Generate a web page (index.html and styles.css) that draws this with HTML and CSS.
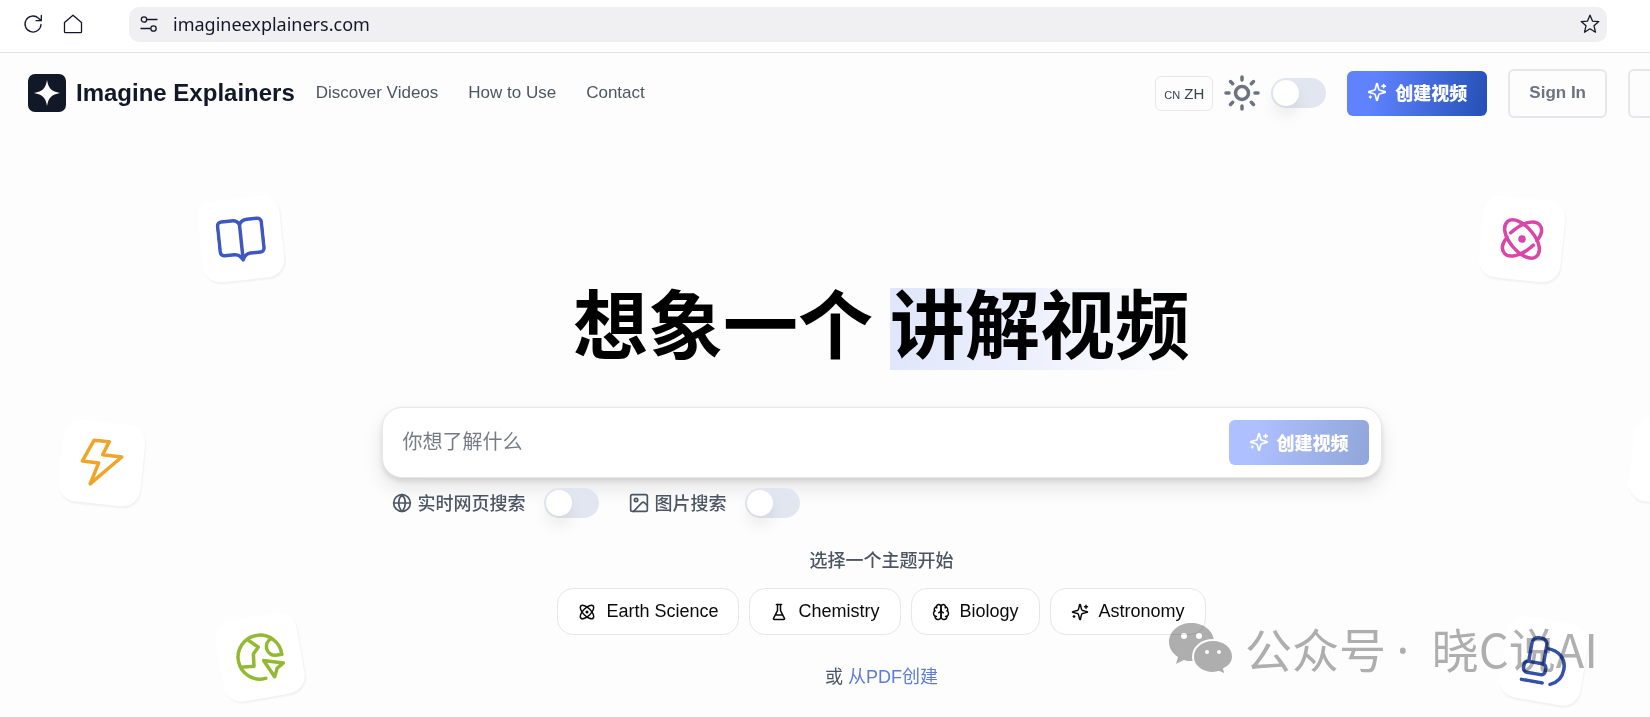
FILE: index.html
```html
<!DOCTYPE html>
<html lang="zh">
<head>
  <meta charset="UTF-8" />
  <title>Imagine Explainers</title>
  <link rel="stylesheet" href="styles.css">
</head>
<body>
  <svg class="sprite" aria-hidden="true">
    <symbol id="sparkles" viewBox="0 0 24 24">
      <path d="M9.937 15.5A2 2 0 0 0 8.5 14.063l-6.135-1.582a.5.5 0 0 1 0-.962L8.5 9.936A2 2 0 0 0 9.937 8.5l1.582-6.135a.5.5 0 0 1 .963 0L14.063 8.5A2 2 0 0 0 15.5 9.937l6.135 1.581a.5.5 0 0 1 0 .964L15.5 14.063a2 2 0 0 0-1.437 1.437l-1.582 6.135a.5.5 0 0 1-.963 0z" />
      <path d="M20 3v4M22 5h-4M4 17v2M5 18H3" />
    </symbol>
    <symbol id="bolt" viewBox="0 0 48 48">
      <path d="M13.700 2.300 29 2l-5.200 13.700L43 16 14.400 46l6.300-21.700-16.500-.2z" />
    </symbol>
  </svg>

  <div class="browser-bar">
    <button class="browser-button" aria-label="Reload">
      <svg class="icon" viewBox="0 0 20 20"><path d="M18 10.500a8 8 0 1 1-2.500-6.300L18 6.500M18.300 1.500v5.200h-5.200" /></svg>
    </button>
    <button class="browser-button" aria-label="Home">
      <svg class="icon" viewBox="0 0 20 20"><path d="M1.500 8.500 10 1.200l8.500 7.300v9.200a1 1 0 0 1-1 1h-15a1 1 0 0 1-1-1z" /></svg>
    </button>
    <div class="address">
      <svg class="icon" viewBox="0 0 20 20"><circle cx="5" cy="5.500" r="2.700" /><path d="M8 5.500h10M2 14.500h9" /><circle cx="14.500" cy="14.500" r="2.700" /></svg>
      <input type="text" value="imagineexplainers.com" aria-label="Address" />
      <button class="star" aria-label="Bookmark">
        <svg class="icon" viewBox="0 0 20 20"><path d="m10 1.200 2.500 5.900 6.300.5-4.800 4.200 1.500 6.400-5.500-3.400-5.500 3.400L6 11.800 1.200 7.600l6.300-.5z" /></svg>
      </button>
    </div>
  </div>

  <div class="page">
    <header>
      <a class="brand" href="#">
        <svg class="logo" viewBox="0 0 38 38"><rect width="38" height="38" rx="7" /><path d="M19 6c1.500 8.500 4.500 11.500 13 13-8.500 1.500-11.500 4.500-13 13-1.500-8.500-4.500-11.500-13-13 8.500-1.500 11.500-4.500 13-13z" /></svg>
        <strong>Imagine Explainers</strong>
      </a>
      <nav>
        <a href="#">Discover Videos</a>
        <a href="#">How to Use</a>
        <a href="#">Contact</a>
      </nav>
      <div class="actions">
        <button class="language"><small>CN</small> ZH</button>
        <label class="theme">
          <svg class="sun" viewBox="0 0 36 36"><circle cx="18" cy="18" r="6.500" /><path d="M18 2v3M18 31v3M2 18h3M31 18h3M6.500 6.500l2.200 2.200M27.300 27.300l2.200 2.200M6.500 29.500l2.200-2.200M27.300 8.700l2.200-2.200" /></svg>
          <input class="switch" type="checkbox" aria-label="Theme" />
        </label>
        <button class="create"><svg class="icon"><use href="#sparkles" /></svg>创建视频</button>
        <button class="sign">Sign In</button>
        <button class="sign" aria-label="Sign Up"></button>
      </div>
    </header>

    <main>
      <h1>想象一个 <mark>讲解视频</mark></h1>

      <form class="search">
        <input type="text" placeholder="你想了解什么" aria-label="你想了解什么" />
        <button class="create" type="button" disabled><svg class="icon"><use href="#sparkles" /></svg>创建视频</button>
      </form>

      <div class="options">
        <label>
          <svg class="icon" viewBox="0 0 24 24"><circle cx="12" cy="12" r="10" /><path d="M12 2a14.500 14.500 0 0 0 0 20 14.500 14.500 0 0 0 0-20M2 12h20" /></svg>
          <span>实时网页搜索</span>
          <input class="switch" type="checkbox" />
        </label>
        <label>
          <svg class="icon" viewBox="0 0 24 24"><rect x="2" y="2" width="20" height="20" rx="2" /><circle cx="8.500" cy="8.500" r="2" /><path d="m22 15-3.600-3.400a2 2 0 0 0-2.800 0L5.500 22" /></svg>
          <span>图片搜索</span>
          <input class="switch" type="checkbox" />
        </label>
      </div>

      <p class="topics-title">选择一个主题开始</p>
      <div class="topics">
        <button>
          <svg class="icon" viewBox="0 0 24 24"><circle cx="12" cy="12" r="1" /><path d="M20.200 20.200c2.040-2.030.02-7.360-4.500-11.900-4.540-4.520-9.870-6.540-11.900-4.500-2.040 2.030-.02 7.360 4.500 11.900 4.540 4.520 9.870 6.540 11.900 4.500Z" /><path d="M15.700 15.700c4.520-4.540 6.540-9.870 4.500-11.900-2.030-2.040-7.360-.02-11.900 4.500-4.520 4.540-6.540 9.870-4.500 11.900 2.030 2.040 7.360.02 11.900-4.500Z" /></svg>
          Earth Science
        </button>
        <button>
          <svg class="icon" viewBox="0 0 24 24"><path d="M10 2v7.527a2 2 0 0 1-.211.896L4.720 20.550a1 1 0 0 0 .9 1.450h12.760a1 1 0 0 0 .9-1.450l-5.069-10.127A2 2 0 0 1 14 9.527V2M8.500 2h7M7 16h10" /></svg>
          Chemistry
        </button>
        <button>
          <svg class="icon" viewBox="0 0 24 24"><path d="M12 5a3 3 0 1 0-5.997.125 4 4 0 0 0-2.526 5.770 4 4 0 0 0 .556 6.588A4 4 0 1 0 12 18Z" /><path d="M12 5a3 3 0 1 1 5.997.125 4 4 0 0 1 2.526 5.770 4 4 0 0 1-.556 6.588A4 4 0 1 1 12 18Z" /><path d="M15 13a4.500 4.500 0 0 1-3-4 4.500 4.500 0 0 1-3 4M17.599 6.500a3 3 0 0 0 .399-1.375M6.003 5.125A3 3 0 0 0 6.401 6.500M3.477 10.896a4 4 0 0 1 .585-.396M19.938 10.500a4 4 0 0 1 .585.396M6 18a4 4 0 0 1-1.967-.516M19.967 17.484A4 4 0 0 1 18 18" /></svg>
          Biology
        </button>
        <button><svg class="icon"><use href="#sparkles" /></svg>Astronomy</button>
      </div>

      <p class="pdf">或 <a href="#">从PDF创建</a></p>
    </main>

    <!-- floating subject cards -->
    <div class="float book">
      <svg viewBox="0 0 48 48"><path d="M24 10c-1-3-4-5-8-5H6a4 4 0 0 0-4 4v26a4 4 0 0 0 4 4h10c4 0 6 2 8 6 2-4 4-6 8-6h10a4 4 0 0 0 4-4V9a4 4 0 0 0-4-4H32c-4 0-7 2-8 5zM24 10v34" /></svg>
    </div>
    <div class="float atom">
      <svg viewBox="0 0 48 48"><circle cx="24" cy="24" r="2" /><path d="M40 40c-5 5-16 1-25-8S3 13 8 8s16-1 25 8 12 19 7 24z" /><path d="M12 19c1-1 2-2 3-3C24 7 35 3 40 8c4 4 3 10-1 16M36 29c-1 1-2 2-3 3-9 9-20 13-25 8-4-4-3-10 1-16" /></svg>
    </div>
    <div class="float bolt"><svg><use href="#bolt" /></svg></div>
    <div class="float bolt-right"><svg><use href="#bolt" /></svg></div>
    <div class="float earth">
      <svg viewBox="0 0 48 48"><path d="M26 46A22 22 0 1 1 46 25" /><path d="M15 5l9 9-6 6-1.500 12L4 31M38 8c-4 1-6 5-6 9s4 8 8 8h6" /><path d="M27 28l19 6-7 4-4 8z" /></svg>
    </div>
    <div class="float microscope">
      <svg viewBox="0 0 48 48"><path d="M9 27V8a6 6 0 0 1 6-6h3a6 6 0 0 1 6 6v19" /><rect x="5" y="27" width="22" height="11" rx="4" /><path d="M25 11c12 0 20 7 20 18 0 8-4 14-11 17M5 46h21" /></svg>
    </div>
  </div>

  <div class="watermark">
    <svg viewBox="0 0 64 52">
      <path d="M22 0C10 0 0 8 0 19c0 6 3 11 9 15l-2 7 8-4c2 1 5 1 7 1 13 0 23-8 23-19S35 0 22 0z" />
      <path class="front" d="M44 17c-11 0-20 7-20 17 0 9 9 16 20 16l6-1 7 3-2-6c6-3 9-7 9-12 0-10-9-17-20-17z" />
      <g class="eyes"><circle cx="15" cy="13" r="3" /><circle cx="30" cy="13" r="3" /><circle cx="38" cy="29" r="2" /><circle cx="50" cy="29" r="2" /></g>
    </svg>
    <div>公众号 <span class="dot">·</span> 晓C说AI</div>
  </div>
</body>
</html>
```
FILE: styles.css
```css
* {
  box-sizing: border-box;
}

body {
  margin: 0;
  min-height: 100vh;
  overflow: hidden;
  position: relative;
  background-color: #fdfdfd;
  font-family: "Liberation Sans", "Noto Sans CJK SC", sans-serif;
  font-size: 18px;
  color: #4b5563;
}

button,
input {
  font-family: inherit;
  font-size: inherit;
}

button {
  cursor: pointer;
}

a {
  color: inherit;
  text-decoration: none;
}

svg {
  flex: none;
  fill: none;
  stroke: currentColor;
  stroke-width: 2;
  stroke-linecap: round;
  stroke-linejoin: round;
}

.sprite {
  position: absolute;
  width: 0;
  height: 0;
}

.icon {
  width: 20px;
  height: 20px;
}

/* browser bar */
.browser-bar {
  display: flex;
  align-items: center;
  gap: 20px;
  height: 53px;
  padding: 0 43px 4px 23px;
  background: #fff;
  border-bottom: 1px solid #e3e3e5;
  color: #15152b;
}

.browser-bar svg {
  stroke-width: 1.3;
}

.browser-button,
.star {
  display: flex;
  padding: 0;
  border: none;
  background: none;
  color: inherit;
}

.address {
  flex: 1;
  display: flex;
  align-items: center;
  gap: 14px;
  height: 35px;
  margin-left: 26px;
  padding: 0 7px 0 10px;
  border-radius: 10px;
  background: #f0f0f2;
}

.address input {
  flex: 1;
  padding: 0;
  border: none;
  outline: none;
  background: none;
  font-family: "Noto Sans", sans-serif;
  color: #15152b;
}

/* the site is wider than the window and is cut off on the right */
.page {
  position: relative;
  width: calc(100% + 113px);
}

header {
  display: flex;
  align-items: center;
  height: 80px;
  padding: 0 28px;
}

.brand {
  display: flex;
  align-items: center;
  gap: 10px;
  font-size: 24px;
  color: #111827;
}

.logo {
  width: 38px;
  height: 38px;
  stroke: none;
  fill: #fff;
}

.logo rect {
  fill: #111827;
}

nav {
  display: flex;
  gap: 30px;
  margin-left: 21px;
  font-size: 17px;
}

.actions {
  display: flex;
  align-items: center;
  gap: 21px;
  margin-left: auto;
}

.language {
  height: 35px;
  padding: 0 8px;
  margin-right: -10px;
  border: 1px solid #e5e7eb;
  border-radius: 6px;
  background: #fdfdfd;
  font-size: 15px;
  color: #374151;
}

.language small {
  font-size: 11px;
}

.theme {
  display: flex;
  align-items: center;
  gap: 11px;
  color: #6b7280;
}

.sun {
  width: 36px;
  height: 36px;
  stroke-width: 3.5;
}

.switch {
  appearance: none;
  width: 55px;
  height: 30px;
  margin: 0;
  padding: 2px;
  border-radius: 15px;
  background: #e2e6f0;
  cursor: pointer;
}

.switch::before {
  content: "";
  display: block;
  width: 26px;
  height: 26px;
  border-radius: 50%;
  background: #fff;
  box-shadow: 0 10px 15px rgba(0, 0, 0, 0.07);
}

.switch:checked::before {
  margin-left: 25px;
}

.create {
  display: flex;
  align-items: center;
  gap: 8px;
  height: 45px;
  padding: 0 20px 2px;
  border: none;
  border-radius: 6px;
  background: linear-gradient(100deg, #5f82ff 20%, #2450b4);
  font-weight: 900;
  color: #fff;
}

.create:disabled {
  opacity: 0.5;
}

.sign {
  height: 49px;
  padding: 0 19px;
  border: 2px solid #e5e7eb;
  border-radius: 6px;
  background: #fdfdfd;
  font-size: 17px;
  font-weight: bold;
  color: #6b7280;
}

.sign:last-child {
  min-width: 107px;
}

/* main */
main {
  display: flex;
  flex-direction: column;
  align-items: center;
}

h1 {
  margin: 155px 0 37px;
  font-family: "Noto Sans CJK SC", sans-serif;
  font-size: 75px;
  line-height: 66px;
  color: #000;
}

mark {
  display: inline-block;
  padding-bottom: 16px;
  background: linear-gradient(90deg, #e0e6fb, #fdfdfd);
  color: inherit;
}

.search {
  display: flex;
  align-items: center;
  width: 1000px;
  height: 71px;
  padding: 0 12px 0 20px;
  border: 1px solid #e5e7eb;
  border-radius: 20px;
  background: #fff;
  box-shadow: 0 10px 20px rgba(0, 0, 0, 0.1), 0 3px 5px rgba(0, 0, 0, 0.1);
}

.search input {
  flex: 1;
  padding: 0;
  border: none;
  outline: none;
  background: none;
  font-size: 20px;
}

.search input::placeholder {
  color: #757b86;
}

.options {
  display: flex;
  gap: 30px;
  width: 1000px;
  margin-top: 10px;
  padding-left: 10px;
  font-weight: 500;
}

.options label {
  display: flex;
  align-items: center;
  gap: 6px;
}

.options span {
  padding-bottom: 3px;
}

.options .switch {
  margin-left: 12px;
}

.topics-title {
  margin: 30px 0 14px;
  font-weight: 500;
  line-height: 26px;
}

.topics {
  display: flex;
  gap: 10px;
}

.topics button {
  display: flex;
  align-items: center;
  gap: 10px;
  height: 47px;
  padding: 0 20px;
  border: 1px solid #e5e7eb;
  border-radius: 16px;
  background: #fff;
  color: #0a0a0a;
}

.topics .icon {
  width: 18px;
  height: 18px;
}

.pdf {
  margin: 29px 0 0;
  line-height: 26px;
}

.pdf a {
  color: #5c7cd6;
}

/* floating cards */
.float {
  position: absolute;
  display: flex;
  align-items: center;
  justify-content: center;
  width: 82px;
  height: 82px;
  border-radius: 18px;
  background: #fff;
  box-shadow: 1px 2px 2px rgba(0, 0, 0, 0.05);
}

.float svg {
  width: 48px;
  height: 48px;
  stroke-width: 3.5;
}

.book {
  top: 145px;
  left: 200px;
  transform: rotate(-6deg);
  color: #3f57c0;
}

.atom {
  top: 145px;
  right: 200px;
  transform: rotate(6deg);
  color: #d946a8;
}

.bolt,
.bolt-right {
  top: 369px;
  left: 61px;
  transform: rotate(6deg);
  color: #f0a429;
}

.bolt-right {
  left: auto;
  right: 50px;
}

.earth {
  top: 563px;
  left: 219px;
  transform: rotate(-10deg);
  color: #93b932;
}

.microscope {
  top: 567px;
  right: 178px;
  transform: rotate(10deg);
  color: #3450aa;
}

.watermark {
  position: absolute;
  right: 52px;
  bottom: 31px;
  display: flex;
  align-items: center;
  gap: 12px;
  font-family: "Noto Sans CJK SC", sans-serif;
  font-size: 47px;
  line-height: 72px;
  color: #b0b0b0;
  mix-blend-mode: multiply;
  pointer-events: none;
}

.watermark svg {
  width: 64px;
  height: 52px;
  fill: currentColor;
  stroke: none;
}

.watermark .front {
  stroke: #fff;
}

.watermark .eyes {
  fill: #fff;
}

.dot {
  margin-right: 12px;
  font-family: "Noto Sans", sans-serif;
}
```
